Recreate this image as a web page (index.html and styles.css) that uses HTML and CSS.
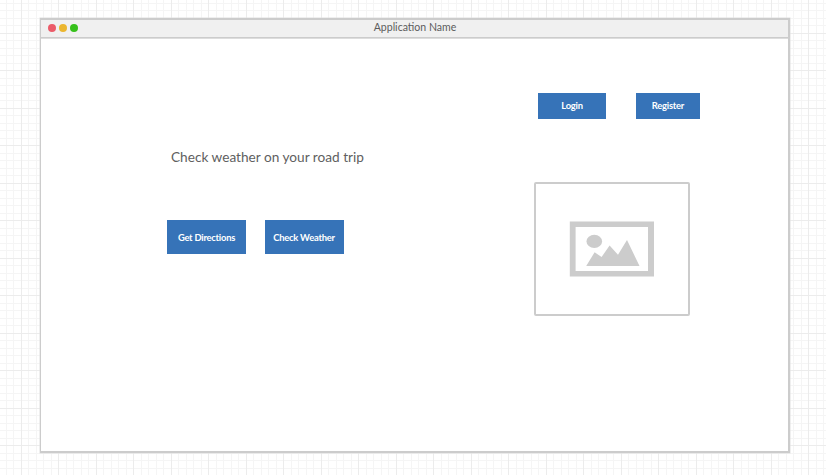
FILE: index.html
```html
<!DOCTYPE html>
<html lang="en">
<head>
<meta charset="utf-8">
<title>Application Name</title>
<link rel="stylesheet" href="styles.css">
</head>
<body>
<div class="window">
  <header class="titlebar">
    <div class="dots"><span class="dot red"></span><span class="dot yellow"></span><span class="dot green"></span></div>
    <div class="title">Application Name</div>
  </header>
  <main class="content">
    <section class="intro">
      <h1>Check weather on your road trip</h1>
      <div class="actions">
        <button class="large">Get Directions</button>
        <button class="large">Check Weather</button>
      </div>
    </section>
    <aside class="side">
      <nav class="account">
        <button class="login">Login</button>
        <button class="register">Register</button>
      </nav>
      <div class="picture">
        <svg width="86" height="56" viewBox="0 0 86 56">
          <path fill="#ccc" fill-rule="evenodd" d="M.8.5H85V55.5H.8ZM6.6 6V50H79V6Z"/>
          <ellipse cx="25.3" cy="20.4" rx="7.8" ry="6.6" fill="#ccc"/>
          <path fill="#ccc" d="M17.2 45 25.6 31.3 32.6 36 40.6 24.5 49 33.7 58 19 70.5 45Z"/>
        </svg>
      </div>
    </aside>
  </main>
</div>
</body>
</html>
```
FILE: styles.css
```css
* { box-sizing: border-box; }
html { height: 100%; }
body {
  margin: 0;
  height: 100%;
  padding: 18px 36px 22px 40px;
  overflow: hidden;
  font-family: Lato, "Liberation Sans", sans-serif;
  background-color: #fff;
  background-image:
    linear-gradient(90deg, #ececec 1px, transparent 1px 37px, #ececec 37px 38px, transparent 38px),
    linear-gradient(180deg, #ececec 1px, transparent 1px 37px, #ececec 37px 38px, transparent 38px),
    linear-gradient(90deg, #f5f5f5 1px, transparent 1px 7px, #f5f5f5 7px 8px, transparent 8px),
    linear-gradient(180deg, #f5f5f5 1px, transparent 1px 7px, #f5f5f5 7px 8px, transparent 8px);
  background-position: 21px 33px;
  background-size: 75px 75px, 75px 75px, 15px 15px, 15px 15px;
}
.window {
  height: 435px;
  border: 2px solid #ccc;
  border-left-width: 1px;
  box-shadow: 0 0 0 .5px #e0e0e0;
  background: #fff;
}
.titlebar {
  position: relative;
  height: 18px;
  display: flex;
  align-items: flex-start;
  justify-content: center;
  background: #f0f0f0;
  border-bottom: 1px solid #ccc;
  box-shadow: 0 1px #ddd;
}
.dots { position: absolute; left: 7px; top: 4px; display: flex; gap: 3px; }
.dot { width: 8px; height: 8px; border-radius: 50%; }
.red { background: #eb5b69; }
.yellow { background: #ebb62f; }
.green { background: #36c01b; }
.title { padding-left: 1px; font-size: 10.55px; line-height: 15px; color: #5c5c5c; }
.content { display: flex; justify-content: space-between; padding: 55px 88px 0 126px; }
.intro { padding-top: 55px; }
h1 {
  margin: 0 0 0 4px;
  font-size: 13.65px;
  line-height: 18px;
  font-weight: 400;
  color: #606060;
  white-space: nowrap;
}
.actions { display: flex; gap: 18.5px; margin-top: 54.4px; }
button {
  border: 0;
  padding: 0 0 1px;
  height: 26px;
  background: #3673b8;
  color: #fff;
  font-family: inherit;
  font-size: 9.4px;
  letter-spacing: -.23px;
  font-weight: 700;
  white-space: nowrap;
}
.large { width: 79px; height: 34px; padding: 0; }
.account { display: flex; gap: 30px; margin-left: 4px; }
.login { width: 68px; }
.register { width: 64px; }
.picture {
  width: 156px;
  height: 134px;
  margin-top: 63px;
  border: 2px solid #ccc;
  border-radius: 2px;
  display: flex;
  align-items: center;
  justify-content: center;
}
```
